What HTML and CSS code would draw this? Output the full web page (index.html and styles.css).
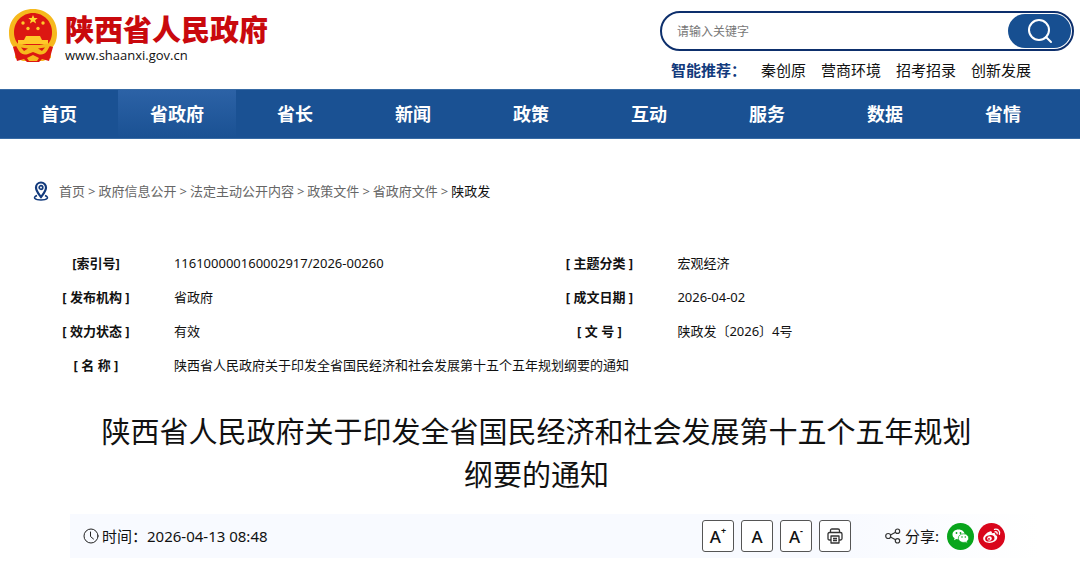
FILE: index.html
```
<!DOCTYPE html>
<html lang="zh-CN">
<head>
    <meta charset="UTF-8">
    <meta name="viewport" content="width=device-width, initial-scale=1.0">
    <title>陕西省人民政府</title>
    <link rel="stylesheet" href="styles.css">
</head>
<body>

<header class="header">
    <a class="logo" href="#">
        <svg class="emblem" viewBox="0 0 50 54" width="50" height="54" aria-hidden="true">
            <path d="M25 1C11 1 1 11 1 25c0 7 2 12 6 16v9l8 3h20l8-3v-9c4-4 6-9 6-16C49 11 39 1 25 1z" fill="#f6b91d"/>
            <path d="M25 5C14 5 6 14 6 24c0 6 2 10 5 13h28c3-3 5-7 5-13C44 14 36 5 25 5z" fill="#dc1712"/>
            <path d="M25 7l1.300 3h3.400l-2.600 2.200 1 3.300-3.100-1.900-3.100 1.900 1-3.300L20.300 10h3.400z" fill="#ffd92e"/>
            <g fill="#ffc92a">
                <circle cx="15" cy="15" r="1.700"/><circle cx="35" cy="15" r="1.700"/>
                <circle cx="20" cy="20.500" r="1.700"/><circle cx="30" cy="20.500" r="1.700"/>
                <path d="M18 28h14l2 4h6v4H10v-4h6z"/>
            </g>
            <path d="M5 39c6-2 8 0 13 0h14c5 0 7-2 13 0l-4 14-7-2-3 3H19l-3-3-7 2z" fill="#dc1712"/>
            <path d="M7 36c8-1 11 2 18 2s10-3 18-2l-4 7c-3 4-6 4-9 3l-5-2-5 2c-3 1-6 1-9-3z" fill="#f6b91d"/>
            <path d="M13 39.500l7 1-4 2.500zM37 39.500l-7 1 4 2.500z" fill="#dc1712"/>
            <path d="M19 50l6-3 6 3-2 3h-8z" fill="#f6b91d"/>
        </svg>
        <span class="logo-text">
            <strong>陕西省人民政府</strong>
            <span>www.shaanxi.gov.cn</span>
        </span>
    </a>
    <div class="search-area">
        <form class="search">
            <input type="text" placeholder="请输入关键字" aria-label="请输入关键字">
            <button type="button" aria-label="搜索">
                <svg viewBox="0 0 26 26" width="26" height="26" fill="none" stroke="#fff" stroke-width="2" stroke-linecap="round">
                    <circle cx="12" cy="12" r="10"/><path d="M19 19l5 5"/>
                </svg>
            </button>
        </form>
        <div class="hot">
            <strong>智能推荐：</strong>
            <a href="#">秦创原</a>
            <a href="#">营商环境</a>
            <a href="#">招考招录</a>
            <a href="#">创新发展</a>
        </div>
    </div>
</header>

<nav class="nav">
    <a href="#">首页</a>
    <a class="active" href="#">省政府</a>
    <a href="#">省长</a>
    <a href="#">新闻</a>
    <a href="#">政策</a>
    <a href="#">互动</a>
    <a href="#">服务</a>
    <a href="#">数据</a>
    <a href="#">省情</a>
</nav>

<main class="main">
    <div class="crumbs">
        <svg viewBox="0 0 16 20" width="16" height="20" fill="none" stroke="#123a7c" aria-hidden="true">
            <path d="M8 16C5 12 3 10 3 6.500a5 5 0 0 1 10 0C13 10 11 12 8 16z" stroke-width="2.200"/>
            <circle cx="8" cy="6.500" r="1.800" stroke-width="1.700"/>
            <path d="M4 14.500c-5 2 -2 4.500 4 4.500s9-2.500 4-4.500" stroke-width="1.500"/>
        </svg>
        <a href="#">首页</a><span>&gt;</span>
        <a href="#">政府信息公开</a><span>&gt;</span>
        <a href="#">法定主动公开内容</a><span>&gt;</span>
        <a href="#">政策文件</a><span>&gt;</span>
        <a href="#">省政府文件</a><span>&gt;</span>
        <a class="current" href="#">陕政发</a>
    </div>

    <table class="info">
        <tr>
            <th scope="row">[索引号]</th>
            <td>116100000160002917/2026-00260</td>
            <th scope="row">[ 主题分类 ]</th>
            <td>宏观经济</td>
        </tr>
        <tr>
            <th scope="row">[ 发布机构 ]</th>
            <td>省政府</td>
            <th scope="row">[ 成文日期 ]</th>
            <td>2026-04-02</td>
        </tr>
        <tr>
            <th scope="row">[ 效力状态 ]</th>
            <td>有效</td>
            <th scope="row">[ 文 号 ]</th>
            <td>陕政发〔2026〕4号</td>
        </tr>
        <tr>
            <th scope="row">[ 名 称 ]</th>
            <td colspan="3">陕西省人民政府关于印发全省国民经济和社会发展第十五个五年规划纲要的通知</td>
        </tr>
    </table>

    <h1 class="title">陕西省人民政府关于印发全省国民经济和社会发展第十五个五年规划纲要的通知</h1>

    <div class="toolbar">
        <div class="time">
            <svg viewBox="0 0 16 16" width="16" height="16" fill="none" stroke="#222" stroke-linecap="round" aria-hidden="true">
                <circle cx="8" cy="8" r="7"/><path d="M7.500 4v4.500l3 2.500"/>
            </svg>
            <span>时间：2026-04-13 08:48</span>
        </div>
        <div class="tools">
            <button type="button">A<sup>+</sup></button>
            <button type="button">A</button>
            <button type="button">A<sup>-</sup></button>
            <button type="button" aria-label="打印">
                <svg viewBox="0 0 16 16" width="16" height="16" fill="none" stroke="#333" stroke-width="1.300" stroke-linejoin="round">
                    <path d="M3.500 4.500V2.500q0-1.500 1.500-1.500h6q1.500 0 1.500 1.500v2M4 12H2.500Q1 12 1 10.500V6q0-1.500 1.500-1.500h11Q15 4.500 15 6v4.500q0 1.500-1.500 1.500H12"/>
                    <path d="M4 8h8v7H4zM6 10.500h4M6 12.500h4"/>
                </svg>
            </button>
        </div>
        <div class="share">
            <svg viewBox="0 0 16 16" width="16" height="16" fill="none" stroke="#333" stroke-width="1.200" aria-hidden="true">
                <circle cx="3.200" cy="8" r="2.500"/><circle cx="12.500" cy="3.200" r="2.200"/><circle cx="12.500" cy="12.800" r="2.200"/>
                <path d="M5.400 7l5.200-2.700M5.400 9l5.200 2.700"/>
            </svg>
            <span>分享:</span>
            <a href="#" aria-label="微信">
                <svg viewBox="0 0 27 27" width="27" height="27">
                    <circle cx="13.500" cy="13.500" r="13.500" fill="#09a51c"/>
                    <path d="M11.500 6.500c-3.600 0-6 2.200-6 4.900 0 1.600.8 2.900 2.100 3.800l-.6 2.100 2.400-1.200c4.700 1.100 8.200-1.400 8.200-4.700 0-2.700-2.500-4.900-6.100-4.900z" fill="#fff"/>
                    <path d="M16.500 10.800c3 0 5.200 2 5.200 4.300 0 1.400-.7 2.500-1.800 3.300l.5 1.900-2.100-1.100c-3.900.9-7-1.300-7-4.100 0-2.300 2.200-4.300 5.200-4.300z" fill="#fff" stroke="#09a51c" stroke-width=".7"/>
                    <g fill="#09a51c"><circle cx="9.500" cy="10" r=".9"/><circle cx="13.500" cy="10" r=".9"/><circle cx="15" cy="14" r=".8"/><circle cx="18.300" cy="14" r=".8"/></g>
                </svg>
            </a>
            <a href="#" aria-label="微博">
                <svg viewBox="0 0 27 27" width="27" height="27">
                    <circle cx="13.500" cy="13.500" r="13.500" fill="#d9061c"/>
                    <path d="M11.800 8.500c1.500-.5 2.500.2 2 1.900 2-.8 4-.4 3.500 1.700 1.500.5 2.200 1.500 1.900 2.900-.5 2.900-4 4.900-7.700 4.900-3.500 0-6.300-1.700-6.300-4.400 0-2.500 3.600-6.100 6.600-7z" fill="#fff"/>
                    <ellipse cx="11.800" cy="15.300" rx="4.700" ry="3.200" fill="#d9061c" transform="rotate(-8 11.800 15.300)"/>
                    <circle cx="11.500" cy="15.500" r="2.300" fill="#fff"/><circle cx="11" cy="15.900" r=".9" fill="#d9061c"/>
                    <path d="M16.500 6.300c3.300-.8 5.900 1.800 4.900 5M17 8.800c1.600-.3 2.500.7 2.100 2" fill="none" stroke="#fff" stroke-width="1.300" stroke-linecap="round"/>
                </svg>
            </a>
        </div>
    </div>
</main>

</body>
</html>
```
FILE: styles.css
```
* {
    box-sizing: border-box;
}

body {
    margin: 0;
    font-family: "Noto Sans", "Noto Sans CJK SC", sans-serif;
    font-size: 13px;
    line-height: 20px;
    color: #111;
    background-color: #fff;
}

a {
    color: inherit;
    text-decoration: none;
}

svg {
    display: block;
    flex: none;
}

button {
    font-family: inherit;
    padding: 0;
    cursor: pointer;
}

/* Header */
.header {
    display: flex;
    justify-content: space-between;
    align-items: flex-start;
    height: 89px;
    padding: 8px 6px 0 8px;
}

.logo {
    display: flex;
    gap: 7px;
}

.logo-text {
    display: flex;
    flex-direction: column;
    padding-top: 4px;
}

.logo-text strong {
    font-size: 29px;
    line-height: 36px;
    font-weight: 900;
    color: #c9090d;
}

.logo-text span {
    font-family: "Open Sans", sans-serif;
    font-size: 13px;
    line-height: 14px;
}

.search-area {
    width: 414px;
    padding-top: 3px;
}

.search {
    display: flex;
    height: 40px;
    padding: 1px;
    border: 2px solid #0d2f6c;
    border-radius: 20px;
}

.search input {
    flex: 1;
    min-width: 0;
    padding: 0 14px;
    border: none;
    outline: none;
    background: none;
    font-family: inherit;
    font-size: 12px;
}

.search input::placeholder {
    color: #777;
}

.search button {
    display: flex;
    align-items: center;
    justify-content: center;
    width: 63px;
    border: none;
    border-radius: 17px;
    background-color: #174f91;
}

.hot {
    display: flex;
    gap: 15px;
    padding: 9px 0 0 11px;
    font-size: 15px;
}

.hot strong {
    color: #123a7c;
}

/* Navigation */
.nav {
    display: flex;
    height: 50px;
    padding-right: 18px;
    background-color: #1a5193;
    border-top: 1px solid #386ba5;
    border-bottom: 1px solid #386ba5;
}

.nav a {
    flex: 1;
    text-align: center;
    font-size: 18px;
    line-height: 48px;
    font-weight: 700;
    color: #fff;
}

.nav .active {
    background: linear-gradient(#2c62a6, #1a5193);
}

/* Content */
.main {
    padding: 42px 40px 0 33px;
}

.crumbs {
    display: flex;
    color: #666;
}

.crumbs svg {
    margin-right: 10px;
}

.crumbs span {
    margin: 0 3px;
}

.crumbs .current {
    color: #111;
}

.info {
    width: 100%;
    margin-top: 45px;
    border-collapse: collapse;
    table-layout: fixed;
}

.info th {
    width: 12.5%;
    height: 34px;
    padding: 0;
    text-align: center;
    font-weight: 700;
}

.info td {
    padding: 0 0 0 15px;
}

.title {
    max-width: 880px;
    margin: 28px auto 0;
    font-size: 29px;
    line-height: 43px;
    font-weight: 400;
    text-align: center;
}

.toolbar {
    display: flex;
    align-items: center;
    height: 44px;
    margin: 18px 0 0 37px;
    padding: 0 35px 0 13px;
    font-size: 15px;
    background: linear-gradient(90deg, #f8faff 80%, #fff);
}

.time {
    display: flex;
    align-items: center;
    gap: 3px;
}

.tools {
    display: flex;
    gap: 7px;
    margin-left: auto;
}

.tools button {
    display: flex;
    align-items: center;
    justify-content: center;
    width: 32px;
    height: 32px;
    border: 1px solid #555;
    border-radius: 3px;
    background-color: #fff;
    color: #111;
    font-size: 17px;
    font-weight: 500;
}

.tools sup {
    font-size: 9px;
    font-weight: 700;
    line-height: 20px;
    align-self: flex-start;
}

.share {
    display: flex;
    align-items: center;
    gap: 4px;
    margin-left: 34px;
}

.share span {
    margin-right: 4px;
}
```
